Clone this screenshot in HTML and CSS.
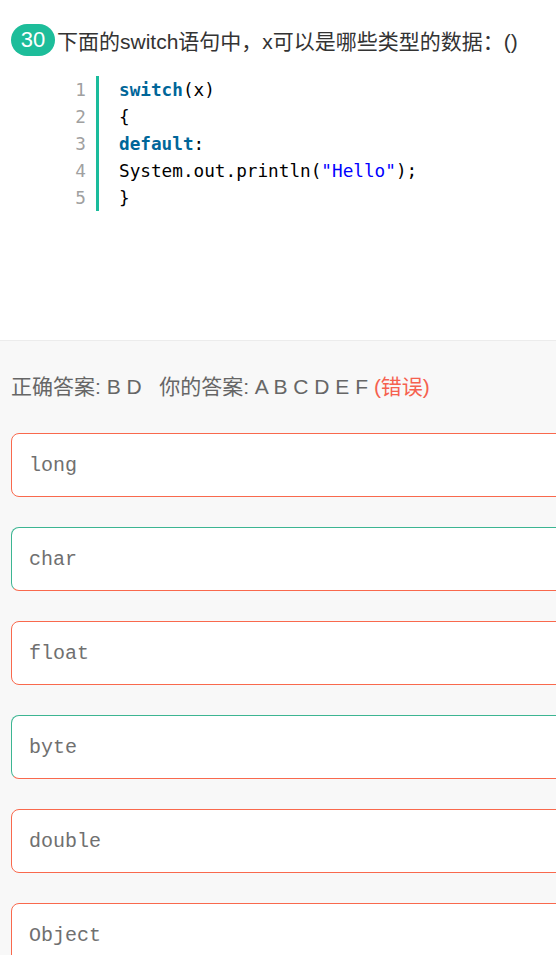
FILE: index.html
```html
<!DOCTYPE html>
<html lang="zh">
<head>
<meta charset="utf-8">
<link rel="stylesheet" href="styles.css">
</head>
<body>
<div class="question">
  <div class="title">
    <span class="badge">30</span>
    <span class="title-text">下面的switch语句中，x可以是哪些类型的数据：()</span>
  </div>
  <div class="code">
    <ol class="nums">
      <li>1</li><li>2</li><li>3</li><li>4</li><li>5</li>
    </ol>
    <div class="lines">
      <div class="ln"><span class="kw">switch</span>(x)</div>
      <div class="ln">{</div>
      <div class="ln"><span class="kw">default</span>:</div>
      <div class="ln">System.out.println(<span class="str">"Hello"</span>);</div>
      <div class="ln">}</div>
    </div>
  </div>
</div>
<div class="answers">
  <div class="result">正确答案: B D &nbsp; 你的答案: A B C D E F <span class="wrong">(错误)</span></div>
  <div class="options">
    <div class="opt">long</div>
    <div class="opt right">char</div>
    <div class="opt">float</div>
    <div class="opt right">byte</div>
    <div class="opt">double</div>
    <div class="opt">Object</div>
  </div>
</div>
</body>
</html>
```
FILE: styles.css
```css
html, body {
  margin: 0;
  padding: 0;
  overflow-x: hidden;
  background: #f8f8f8;
}
body {
  font-family: "Liberation Sans", "Noto Sans CJK SC", sans-serif;
}
.question {
  background: #fff;
  padding: 24px 0 0 11px;
  height: 316px;
  border-bottom: 1px solid #ececec;
}
.title {
  display: flex;
  align-items: center;
  height: 32px;
}
.badge {
  display: inline-flex;
  align-items: center;
  justify-content: center;
  width: 44px;
  height: 32px;
  border-radius: 16px;
  background: #1dbd9a;
  color: #fff;
  font-size: 22px;
  margin-right: 2px;
}
.title-text {
  font-size: 21px;
  color: #333;
}
.code {
  display: flex;
  margin: 20px 0 0 60px;
  font-family: "DejaVu Sans Mono", monospace;
  font-size: 17.7px;
}
.nums {
  list-style: none;
  margin: 0;
  padding: 0 10px 0 0;
  width: 15px;
  text-align: right;
  color: #a0a0a0;
  border-right: 3px solid #1abc9c;
}
.nums li, .ln {
  height: 27px;
  line-height: 29px;
}
.lines {
  padding-left: 20px;
  color: #000;
}
.kw {
  color: #006699;
  font-weight: bold;
}
.str {
  color: #0000ff;
}
.answers {
  padding: 32px 0 0 11px;
}
.result {
  font-size: 21px;
  color: #666;
  height: 28px;
  line-height: 28px;
}
.wrong {
  color: #f5614f;
}
.options {
  display: flex;
  flex-direction: column;
  gap: 30px;
  margin-top: 32px;
}
.opt {
  width: 580px;
  height: 62px;
  box-sizing: content-box;
  border: 1px solid #f9694d;
  border-radius: 8px;
  background: #fff;
  display: flex;
  align-items: center;
  padding-left: 17px;
  font-family: "Liberation Mono", monospace;
  font-size: 20px;
  color: #707070;
}
.opt.right {
  border-color: #3cb592 #3cb592 #f9694d #3cb592;
}
```
